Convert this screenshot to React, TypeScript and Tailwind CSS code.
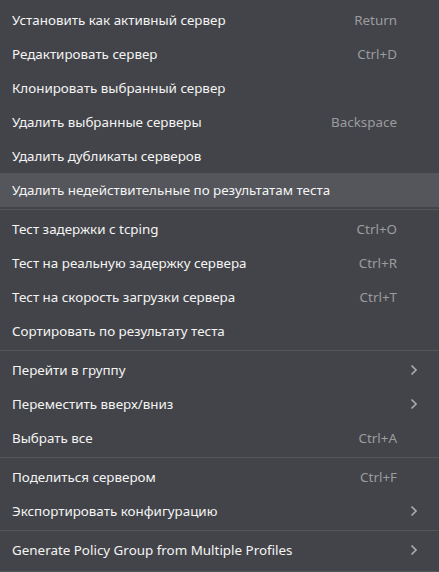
import React from 'react';

type Item =
  | { kind: 'sep' }
  | { kind: 'item'; label: string; shortcut?: string; sub?: boolean; active?: boolean };

const items: Item[] = [
  { kind: 'item', label: 'Установить как активный сервер', shortcut: 'Return' },
  { kind: 'item', label: 'Редактировать сервер', shortcut: 'Ctrl+D' },
  { kind: 'item', label: 'Клонировать выбранный сервер' },
  { kind: 'item', label: 'Удалить выбранные серверы', shortcut: 'Backspace' },
  { kind: 'item', label: 'Удалить дубликаты серверов' },
  { kind: 'item', label: 'Удалить недействительные по результатам теста', active: true },
  { kind: 'sep' },
  { kind: 'item', label: 'Тест задержки с tcping', shortcut: 'Ctrl+O' },
  { kind: 'item', label: 'Тест на реальную задержку сервера', shortcut: 'Ctrl+R' },
  { kind: 'item', label: 'Тест на скорость загрузки сервера', shortcut: 'Ctrl+T' },
  { kind: 'item', label: 'Сортировать по результату теста' },
  { kind: 'sep' },
  { kind: 'item', label: 'Перейти в группу', sub: true },
  { kind: 'item', label: 'Переместить вверх/вниз', sub: true },
  { kind: 'item', label: 'Выбрать все', shortcut: 'Ctrl+A' },
  { kind: 'sep' },
  { kind: 'item', label: 'Поделиться сервером', shortcut: 'Ctrl+F' },
  { kind: 'item', label: 'Экспортировать конфигурацию', sub: true },
  { kind: 'sep' },
  { kind: 'item', label: 'Generate Policy Group from Multiple Profiles', sub: true },
];

function Chevron() {
  return (
    <svg width="8" height="12" viewBox="0 0 8 12" fill="none">
      <path d="M1.5 1.5 L6 6 L1.5 10.5" stroke="#a9aaad" strokeWidth="1.7" />
    </svg>
  );
}

export default function App() {
  return (
    <div
      className="w-[439px] h-[572px] bg-[#434449] pt-[3px] text-[13.4px] text-[#f4f4f4] border-b border-[#56575b]"
      style={{ fontFamily: '"Noto Sans", "Open Sans", sans-serif' }}
    >
      {items.map((it, i) =>
        it.kind === 'sep' ? (
          <div key={i} className="my-[2px] h-px bg-[#55565a]" />
        ) : (
          <div
            key={i}
            className={`h-[34px] flex items-center pl-3 pr-[21px] ${it.active ? 'bg-[#55565b]' : ''}`}
          >
            <span className="flex-1 whitespace-nowrap">{it.label}</span>
            {it.shortcut && <span className="text-[#9b9c9f] mr-[21px]">{it.shortcut}</span>}
            {it.sub && <Chevron />}
          </div>
        )
      )}
    </div>
  );
}
